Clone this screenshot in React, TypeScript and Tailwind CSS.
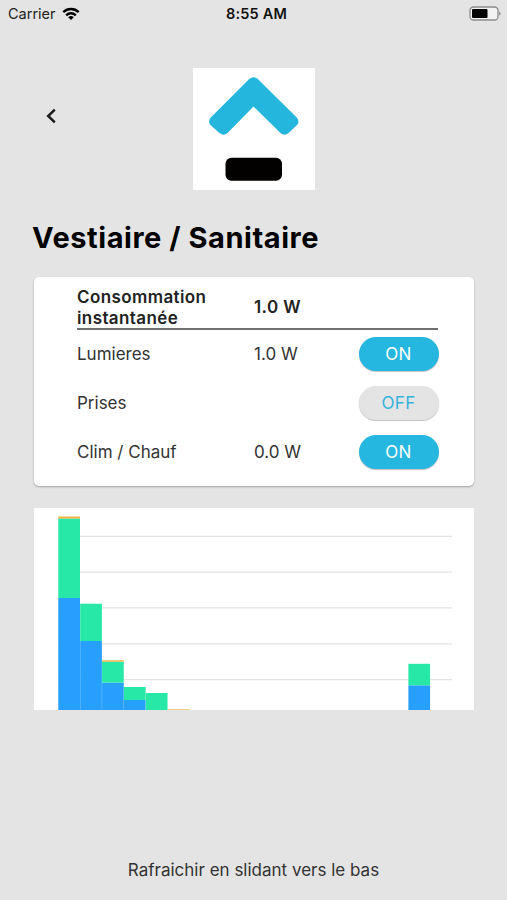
import { useState } from 'react'

type Device = { name: string; power: string | null; on: boolean }

const initialDevices: Device[] = [
  { name: 'Lumieres', power: '1.0 W', on: true },
  { name: 'Prises', power: null, on: false },
  { name: 'Clim / Chauf', power: '0.0 W', on: true },
]

// heights in px, stacked from the bottom: blue, green, yellow
const bars = [
  { slot: 0, blue: 112, green: 79.5, yellow: 2 },
  { slot: 1, blue: 69, green: 37.3, yellow: 0 },
  { slot: 2, blue: 27.4, green: 21, yellow: 1.3 },
  { slot: 3, blue: 10, green: 13, yellow: 0 },
  { slot: 4, blue: 0, green: 17, yellow: 0 },
  { slot: 5, blue: 0, green: 0, yellow: 0.6 },
  { slot: 16, blue: 24.7, green: 21.5, yellow: 0 },
]
const gridLines = [28.3, 64.1, 99.9, 135.8, 171.7]

export default function App() {
  const [devices, setDevices] = useState(initialDevices)

  const toggle = (name: string) =>
    setDevices((list) => list.map((d) => (d.name === name ? { ...d, on: !d.on } : d)))

  return (
    <div className="flex h-[900px] w-[507px] flex-col overflow-hidden bg-[#e4e4e4] font-['Inter',sans-serif] text-[#333]">
      <StatusBar />

      <header className="mt-10 grid grid-cols-[1fr_122px_1fr] items-start">
        <button aria-label="Retour" className="mt-10 ml-[45px] w-3">
          <svg width="12" height="16" viewBox="0 0 12 16" fill="none" className="block">
            <path d="M9.8 1.7 3.2 8l6.6 6.3" stroke="#1c1c1c" strokeWidth="2.5" />
          </svg>
        </button>
        <Logo />
      </header>

      <h1 className="mt-[29px] ml-8 text-[29px] leading-[38px] font-bold tracking-[0.55px] whitespace-nowrap text-black">
        Vestiaire / Sanitaire
      </h1>

      <section className="mx-[34px] mt-5 h-[209px] w-[440px] rounded-[5px] bg-white pr-[36px] pl-[43px] shadow-[0_1px_2px_rgba(0,0,0,0.3)]">
        <div className="grid h-[53px] grid-cols-[177px_1fr] items-center border-b-2 border-[#707070] pt-[10px] text-[17px] leading-[20.5px] font-semibold tracking-[0.4px] text-[#222]">
          <div>
            Consommation
            <br />
            instantanée
          </div>
          <div>1.0 W</div>
        </div>
        {devices.map((d) => (
          <div key={d.name} className="grid h-[49px] grid-cols-[177px_105px_80px] items-center text-[17px]">
            <div>{d.name}</div>
            <div>{d.power}</div>
            <Toggle on={d.on} onClick={() => toggle(d.name)} />
          </div>
        ))}
      </section>

      <Chart />

      <footer className="mt-auto pb-[18px] text-center text-[17px] leading-6 whitespace-nowrap">
        Rafraichir en slidant vers le bas
      </footer>
    </div>
  )
}

function StatusBar() {
  return (
    <div className="grid h-7 shrink-0 grid-cols-3 items-center px-2 text-[14.5px] text-[#222]">
      <div className="flex items-center gap-[6px]">
        <span>Carrier</span>
        <svg width="18" height="14" viewBox="0 0 18 14" fill="none" stroke="#000" strokeWidth="2.4" className="-mt-px">
          <path d="M1.3 5.2a11 11 0 0 1 15.4 0" />
          <path d="M4.2 8.3a6.8 6.8 0 0 1 9.6 0" />
          <path d="M9 13 6.2 10.3a4 4 0 0 1 5.6 0Z" fill="#000" stroke="none" />
        </svg>
      </div>
      <div className="pl-[6px] text-center font-semibold tracking-[0.2px] whitespace-nowrap text-[#111]">8:55 AM</div>
      <div className="-mr-[2px] flex justify-end pb-[2px]">
        <svg width="33" height="15" viewBox="0 0 33 15">
          <rect x="2" y="1" width="28" height="13" rx="3.5" fill="#f2f2f2" stroke="#8a8a8a" strokeWidth="1.3" />
          <rect x="4" y="3" width="15.5" height="9" rx="1" fill="#000" />
          <path d="M31.3 5.4v4.2c1.6-.6 1.6-3.6 0-4.2Z" fill="#777" />
        </svg>
      </div>
    </div>
  )
}

function Logo() {
  return (
    <svg width="122" height="122" viewBox="0 0 122 122" className="block bg-white">
      <path
        d="M56.2 11Q60.5 7.3 64.8 11L103.5 49.2Q107.5 53.5 103.5 57.5L95.5 65Q91.5 68.5 87.5 65L60.5 38.5 34.5 65Q30.5 68.5 26.5 65L18 57.5Q14 53.5 18 49.2Z"
        fill="#25b6de"
      />
      <rect x="32.5" y="89.7" width="56.5" height="23" rx="6" fill="#030000" />
    </svg>
  )
}

function Toggle({ on, onClick }: { on: boolean; onClick: () => void }) {
  return (
    <button
      onClick={onClick}
      className={`-mt-px h-[34px] w-[80px] rounded-full pt-px pr-px text-[17px] tracking-[0.3px] shadow-[0_1px_1px_rgba(0,0,0,0.25)] ${
        on ? 'bg-[#25b7df] text-white' : 'bg-[#e4e4e4] text-[#35b4dc]'
      }`}
    >
      {on ? 'ON' : 'OFF'}
    </button>
  )
}

function Chart() {
  const height = 202
  return (
    <svg width="440" height={height} className="mt-[22px] ml-[34px] block shrink-0 bg-white">
      {gridLines.map((y) => (
        <line key={y} x1="24" x2="418" y1={y} y2={y} stroke="#e3e3e3" strokeWidth="1.3" />
      ))}
      {bars.map((b) => {
        const x = 24.3 + b.slot * 21.88
        return (
          <g key={b.slot}>
            <rect x={x} y={height - b.blue} width="21.7" height={b.blue} fill="#279ffc" />
            <rect x={x} y={height - b.blue - b.green} width="21.7" height={b.green} fill="#27e8a7" />
            <rect x={x} y={height - b.blue - b.green - b.yellow} width="21.7" height={b.yellow} fill="#f2b33d" />
          </g>
        )
      })}
    </svg>
  )
}
